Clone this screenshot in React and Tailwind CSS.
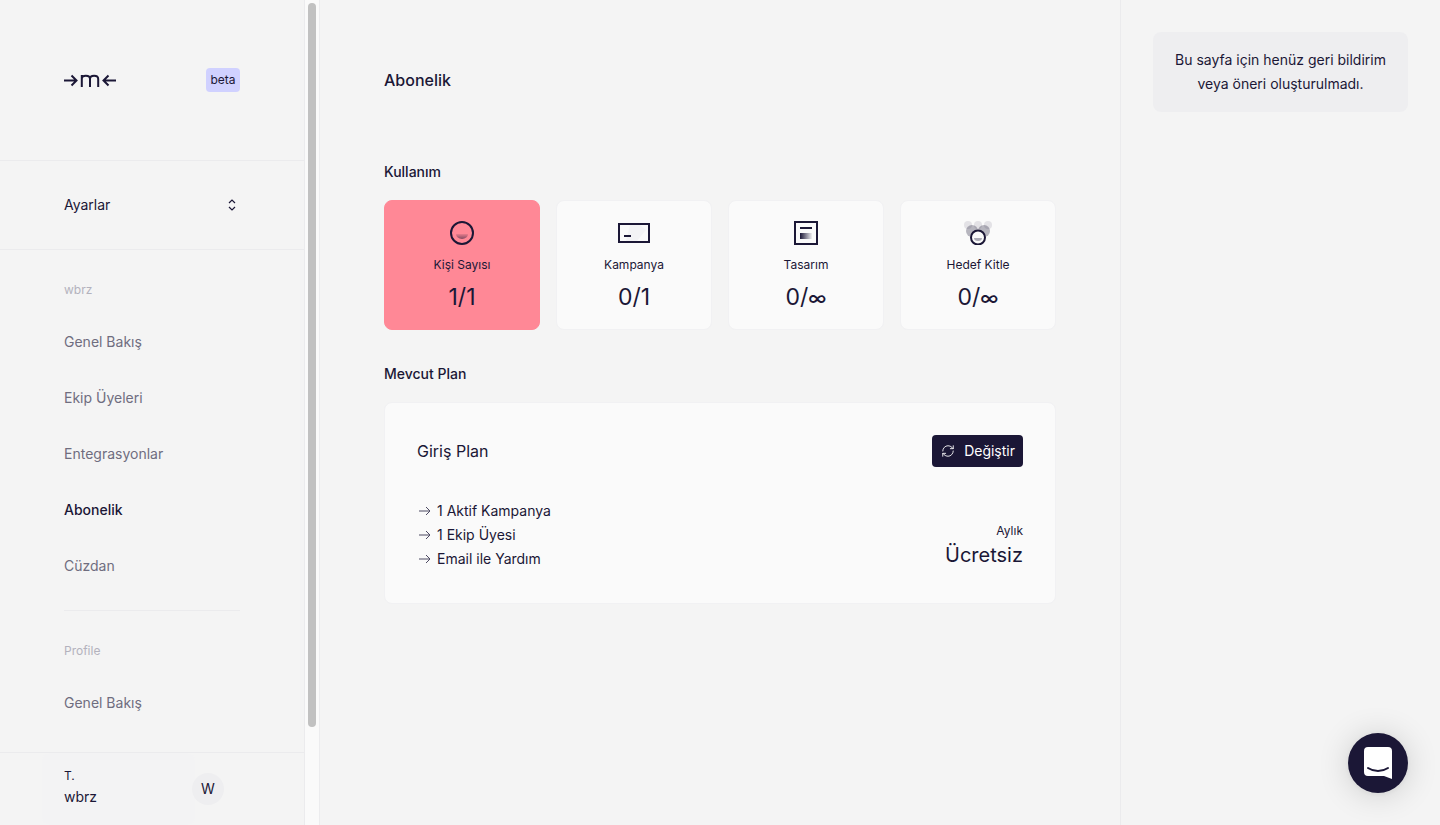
import { RefreshCw } from "lucide-react";

const navItems = ["Genel Bakış", "Ekip Üyeleri", "Entegrasyonlar", "Abonelik", "Cüzdan"];
const features = ["1 Aktif Kampanya", "1 Ekip Üyesi", "Email ile Yardım"];

function Logo() {
  return (
    <svg width="52" height="13" viewBox="0 0 52 13" fill="none" stroke="#1b1736" strokeWidth="2">
      <path d="M0 6.500h12.500M7.500 1.500l5 5-5 5" />
      <path d="M17.800 13V1M17.800 5c0-4.500 8.200-4.500 8.200 0v8M26 5c0-4.500 8.200-4.500 8.200 0v8" />
      <path d="M52 6.500H39.500M44.500 1.500l-5 5 5 5" />
    </svg>
  );
}

function Chevrons() {
  return (
    <svg width="8" height="14" viewBox="0 0 8 14" fill="none" stroke="#1b1736" strokeWidth="1.2">
      <path d="M1 5l3-3 3 3M1 9l3 3 3-3" />
    </svg>
  );
}

function SmallArrow() {
  return (
    <svg width="12" height="10" viewBox="0 0 12 10" fill="none" stroke="#4d4a63" strokeWidth="1">
      <path d="M0 5h11M7 1l4 4-4 4" />
    </svg>
  );
}

function FaceIcon() {
  return (
    <svg width="24" height="24" viewBox="0 0 24 24" fill="none">
      <defs>
        <linearGradient id="face" x1="0" y1="0" x2="0" y2="1">
          <stop offset="0" stopColor="#1b1736" stopOpacity="0.1" />
          <stop offset="1" stopColor="#1b1736" stopOpacity="0.55" />
        </linearGradient>
      </defs>
      <circle cx="12" cy="12" r="11" stroke="#1b1736" strokeWidth="2" />
      <path d="M6 13h12a6 5 0 0 1-12 0z" fill="url(#face)" />
    </svg>
  );
}

function CardIcon() {
  return (
    <svg width="32" height="20" viewBox="0 0 32 20" fill="none">
      <path d="M12 2h10l6 5-9 11H8z" fill="#f3f3f5" />
      <rect x="1" y="1" width="30" height="18" stroke="#1b1736" strokeWidth="2" />
      <path d="M6 13h7" stroke="#1b1736" strokeWidth="2" />
    </svg>
  );
}

function LayoutIcon() {
  return (
    <svg width="24" height="24" viewBox="0 0 24 24" fill="none">
      <defs>
        <linearGradient id="block" x1="1" y1="0" x2="0" y2="0">
          <stop offset="0" stopColor="#1b1736" stopOpacity="0.05" />
          <stop offset="1" stopColor="#1b1736" />
        </linearGradient>
      </defs>
      <rect x="1" y="1" width="22" height="22" stroke="#1b1736" strokeWidth="2" />
      <path d="M6 7h12" stroke="#1b1736" strokeWidth="2" />
      <rect x="6" y="12" width="12" height="6" fill="url(#block)" />
    </svg>
  );
}

function AudienceIcon() {
  return (
    <svg width="28" height="24" viewBox="0 0 28 24" fill="none">
      <circle cx="4" cy="4" r="4" fill="#1b1736" fillOpacity="0.1" />
      <circle cx="14" cy="4" r="4" fill="#1b1736" fillOpacity="0.1" />
      <circle cx="24" cy="4" r="4" fill="#1b1736" fillOpacity="0.1" />
      <circle cx="8" cy="10" r="6" fill="#1b1736" fillOpacity="0.3" />
      <circle cx="20" cy="10" r="6" fill="#1b1736" fillOpacity="0.3" />
      <circle cx="14" cy="16.500" r="7" fill="#fafafa" stroke="#1b1736" strokeWidth="2" />
      <path d="M10 17h8a4 3 0 0 1-8 0z" fill="#1b1736" fillOpacity="0.35" />
    </svg>
  );
}

function StatCard({ icon, label, value, active }) {
  return (
    <div className={`h-[130px] rounded-lg border flex flex-col items-center ${active ? "bg-[#ff8896] border-[#ff8896]" : "bg-[#fafafa] border-[#f1f1f3]"}`}>
      <div className="h-[24px] mt-[20px] flex items-center justify-center">{icon}</div>
      <div className="mt-[8px] text-xs leading-[24px]">{label}</div>
      <div className="mt-[4px] text-[23px] leading-[32px]">{value}</div>
    </div>
  );
}

export default function App() {
  const infinity = <>0/<span className="text-[19px] font-medium">∞</span></>;

  return (
    <div className="h-[825px] w-[1440px] overflow-hidden flex bg-[#f4f4f4] text-[#1b1736] font-['Inter',sans-serif]">
      <aside className="w-[305px] h-full flex flex-col border-r border-[#ebebed]">
        <div className="h-[161px] shrink-0 border-b border-[#ebebed] px-[64px] pt-[68px] flex items-start justify-between">
          <div className="h-[24px] flex items-center"><Logo /></div>
          <span className="h-[24px] w-[34px] text-center rounded bg-[#d0d1ff] text-xs leading-[24px]">beta</span>
        </div>
        <div className="h-[89px] shrink-0 border-b border-[#ebebed] px-[64px] flex items-center justify-between text-sm">
          <span>Ayarlar</span>
          <span className="mr-[4px]"><Chevrons /></span>
        </div>
        <nav className="flex-1 min-h-0 px-[64px] overflow-hidden">
          <div className="mt-[32px] text-xs leading-[16px] text-[#b3b2bd]">wbrz</div>
          <ul className="mt-[16px]">
            {navItems.map((item) => (
              <li key={item} className={`h-[56px] flex items-center text-sm ${item === "Abonelik" ? "font-medium text-[#1b1736]" : "text-[#6f6d7f]"}`}>
                {item}
              </li>
            ))}
          </ul>
          <div className="mt-[16px] h-px bg-[#ebebed]" />
          <div className="mt-[32px] text-xs leading-[16px] text-[#b3b2bd]">Profile</div>
          <div className="mt-[16px] h-[56px] flex items-center text-sm text-[#6f6d7f]">Genel Bakış</div>
        </nav>
        <div className="h-[73px] shrink-0 border-t border-[#ebebed] pl-[42px] flex items-center">
          <div className="w-[153px] h-full pl-[22px] pb-[5px] bg-[#f3f3f4] rounded-lg flex flex-col justify-center text-sm">
            <div className="text-xs leading-[20px]">T.</div>
            <div className="leading-[20px] mt-[1px]">wbrz</div>
          </div>
          <div className="-ml-[3px] w-[32px] h-[32px] rounded-full bg-[#eeeef0] flex items-center justify-center text-sm">W</div>
        </div>
      </aside>

      <div className="w-[15px] h-full shrink-0 bg-[#fafafa] border-r border-[#ececee] pt-[3px] pl-[3px]">
        <div className="w-[8px] h-[724px] rounded-full bg-[#c1c1c1]" />
      </div>

      <main className="w-[801px] h-full shrink-0 border-r border-[#ebebed] px-[64px]">
        <h1 className="mt-[68px] text-base font-medium leading-[24px]">Abonelik</h1>
        <h2 className="mt-[70px] text-sm font-medium leading-[20px]">Kullanım</h2>
        <div className="mt-[18px] grid grid-cols-4 gap-[16px]">
          <StatCard active icon={<FaceIcon />} label="Kişi Sayısı" value="1/1" />
          <StatCard icon={<CardIcon />} label="Kampanya" value="0/1" />
          <StatCard icon={<LayoutIcon />} label="Tasarım" value={infinity} />
          <StatCard icon={<AudienceIcon />} label="Hedef Kitle" value={infinity} />
        </div>
        <h2 className="mt-[34px] text-sm font-medium leading-[20px]">Mevcut Plan</h2>
        <div className="mt-[18px] h-[202px] rounded-lg bg-[#fafafa] border border-[#f1f1f3] px-[32px] pt-[32px]">
          <div className="flex items-center justify-between">
            <span className="text-base">Giriş Plan</span>
            <button className="h-[32px] px-[8px] rounded bg-[#1b1736] text-white text-sm flex items-center gap-[8px]">
              <RefreshCw size={16} strokeWidth={1.5} className="p-[1px]" />
              Değiştir
            </button>
          </div>
          <div className="mt-[32px] flex items-end justify-between">
            <ul className="text-sm leading-[24px]">
              {features.map((f) => (
                <li key={f} className="flex items-center gap-[6px] pl-[2px]">
                  <SmallArrow />
                  {f}
                </li>
              ))}
            </ul>
            <div className="text-right mb-[2px]">
              <div className="text-xs leading-[16px] mb-[2px]">Aylık</div>
              <div className="text-xl leading-[28px]">Ücretsiz</div>
            </div>
          </div>
        </div>
      </main>

      <section className="flex-1 px-[32px] pt-[32px]">
        <div className="h-[80px] rounded-lg bg-[#eeeef0] flex items-center justify-center text-center text-sm leading-[24px] px-[16px]">
          Bu sayfa için henüz geri bildirim veya öneri oluşturulmadı.
        </div>
      </section>

      <button className="fixed right-[32px] bottom-[32px] w-[60px] h-[60px] rounded-full bg-[#1b1736] flex items-center justify-center shadow-[0_1px_6px_rgba(0,0,0,0.06),0_2px_32px_rgba(0,0,0,0.16)]">
        <svg width="28" height="32" viewBox="0 0 28 32">
          <path d="M4 0h20a4 4 0 0 1 4 4v28l-8-3H4a4 4 0 0 1-4-4V4a4 4 0 0 1 4-4z" fill="#fff" />
          <path d="M4 21c6 4 14 4 20 0" fill="none" stroke="#1b1736" strokeWidth="2" strokeLinecap="round" />
        </svg>
      </button>
    </div>
  );
}
